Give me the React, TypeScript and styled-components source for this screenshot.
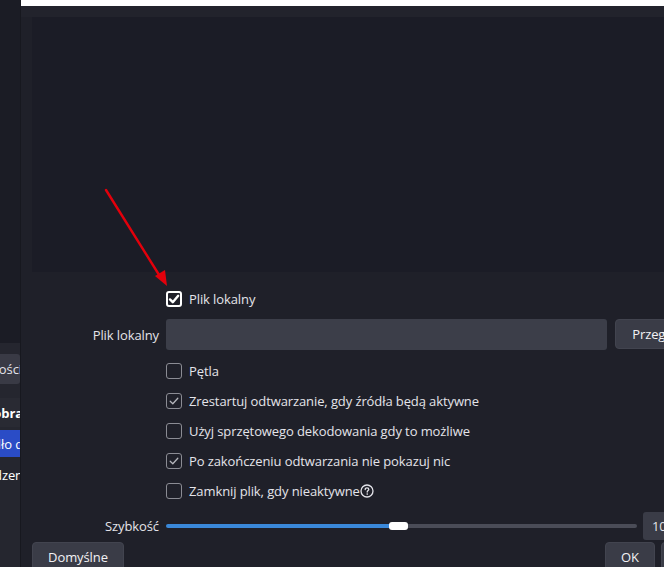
import { createGlobalStyle, styled } from "styled-components";

const GlobalStyle = createGlobalStyle`
  html, body {
    margin: 0;
    padding: 0;
    background: #1b1c25;
    overflow: hidden;
  }
  body {
    font-family: "Open Sans", "Noto Sans", sans-serif;
    font-size: 13px;
    letter-spacing: -0.1px;
    color: #e4e4ea;
  }
`;

type CheckItem = { label: string; checked: boolean; help?: boolean };

const options: CheckItem[] = [
  { label: "Pętla", checked: false },
  { label: "Zrestartuj odtwarzanie, gdy źródła będą aktywne", checked: true },
  { label: "Użyj sprzętowego dekodowania gdy to możliwe", checked: false },
  { label: "Po zakończeniu odtwarzania nie pokazuj nic", checked: true },
  { label: "Zamknij plik, gdy nieaktywne", checked: false, help: true },
];

const speed = 0.48;

const Check = ({ checked, strong }: { checked: boolean; strong?: boolean }) => (
  <StBox $strong={strong}>
    {checked && (
      <svg width="12" height="12" viewBox="0 0 12 12">
        <path
          d={strong ? "M2 6.4 L4.8 9.2 L10.2 2.8" : "M2.2 6.2 L4.8 8.8 L9.8 3.2"}
          fill="none"
          stroke={strong ? "#ffffff" : "#b4b5bb"}
          strokeWidth={strong ? 2.4 : 1.3}
          strokeLinecap="round"
          strokeLinejoin="round"
        />
      </svg>
    )}
  </StBox>
);

const HelpIcon = () => (
  <StHelp width="14" height="14" viewBox="0 0 14 14">
    <circle cx="7" cy="7" r="6" fill="none" stroke="#e4e4ea" strokeWidth="1.3" />
    <path
      d="M5.2 5.6 C5.2 4.4 6 3.8 7 3.8 C8 3.8 8.8 4.5 8.8 5.4 C8.8 6.5 7.2 6.7 7.2 8"
      fill="none"
      stroke="#e4e4ea"
      strokeWidth="1.3"
      strokeLinecap="round"
    />
    <circle cx="7.2" cy="10.1" r="0.8" fill="#e4e4ea" />
  </StHelp>
);

const App = () => {
  return (
    <>
      <GlobalStyle />
      <StPage>
        <StSide>
          <StSideTop />
          <StSidePanel>
            <StSideButton>
              <span>Właściwości</span>
            </StSideButton>
            <StSideItem $bold>
              <span>Filtry obra</span>
            </StSideItem>
            <StSideItem $active>
              <span>Źródło d</span>
            </StSideItem>
            <StSideItem>
              <span>Urządzen</span>
            </StSideItem>
          </StSidePanel>
        </StSide>

        <StDialog>
          <StTitleBar />
          <StBody>
            <StPreview />
            <StForm>
              <StRow $h={30}>
                <span />
                <StCheckLine>
                  <Check checked strong />
                  <span>Plik lokalny</span>
                </StCheckLine>
              </StRow>
              <StRow $h={31} $top={5}>
                <StLabel>Plik lokalny</StLabel>
                <StFileLine>
                  <StInput />
                  <StButton $w={96}>Przeglądaj</StButton>
                </StFileLine>
              </StRow>
              {options.map((o, i) => (
                <StRow key={o.label} $h={30} $top={i === 0 ? 6 : 0}>
                  <span />
                  <StCheckLine>
                    <Check checked={o.checked} />
                    <StText>
                      {o.label}
                      {o.help && <HelpIcon />}
                    </StText>
                  </StCheckLine>
                </StRow>
              ))}
              <StRow $h={28} $top={6}>
                <StLabel>Szybkość</StLabel>
                <StSliderLine>
                  <StTrack>
                    <StFill style={{ width: `${speed * 100}%` }} />
                    <StHandle />
                    <StRest />
                  </StTrack>
                  <StSpin>100%</StSpin>
                </StSliderLine>
              </StRow>
            </StForm>
            <StFooter>
              <StButton $w={92}>Domyślne</StButton>
              <StFooterRight>
                <StButton $w={50}>OK</StButton>
                <StButton $w={50}>Anuluj</StButton>
              </StFooterRight>
            </StFooter>
          </StBody>
          <StArrow width="80" height="110" viewBox="0 0 80 110">
            <line x1="3" y1="4" x2="58" y2="92" stroke="#e3000b" strokeWidth="2.4" strokeLinecap="round" />
            <path d="M52 90 L64 100 L62 84 Z" fill="#e3000b" />
          </StArrow>
        </StDialog>
      </StPage>
    </>
  );
};

export default App;

const StPage = styled.div`
  display: flex;
  width: 722px;
  height: 567px;
  overflow: hidden;
`;

const StSide = styled.div`
  width: 20px;
  flex: none;
  display: flex;
  flex-direction: column;
  background: #1b1c25;
`;

const StSideTop = styled.div`
  height: 343px;
  flex: none;
`;

const StSidePanel = styled.div`
  flex: 1;
  background: #25262f;
  padding-top: 11px;
  display: flex;
  flex-direction: column;
`;

const StSideButton = styled.div`
  height: 30px;
  flex: none;
  background: #393a45;
  border-radius: 0 3px 3px 0;
  display: flex;
  justify-content: flex-end;
  align-items: center;
  overflow: hidden;
  white-space: nowrap;
  margin-bottom: 14px;
  span {
    margin-right: -2px;
  }
`;

const StSideItem = styled.div<{ $bold?: boolean; $active?: boolean }>`
  height: ${(p) => (p.$active ? "27px" : "29px")};
  flex: none;
  margin-bottom: 3px;
  background: ${(p) => (p.$active ? "#2a4cc6" : p.$bold ? "#292a33" : "transparent")};
  font-weight: ${(p) => (p.$bold ? 700 : 400)};
  color: #ffffff;
  display: flex;
  justify-content: flex-end;
  align-items: center;
  overflow: hidden;
  white-space: nowrap;
  span {
    margin-right: -3px;
  }
`;

const StDialog = styled.div`
  position: relative;
  width: 702px;
  flex: none;
  display: flex;
  flex-direction: column;
  background: #1f2029;
  border-left: 1px solid #17181f;
`;

const StTitleBar = styled.div`
  height: 6px;
  flex: none;
  background: #ffffff;
`;

const StBody = styled.div`
  flex: none;
  padding: 11px 12px 0 11px;
  display: flex;
  flex-direction: column;
  background: linear-gradient(#22232c 0 11px, transparent 11px);
`;

const StPreview = styled.div`
  height: 255px;
  flex: none;
  background: #1b1c26;
`;

const StForm = styled.div`
  margin-top: 12px;
  display: flex;
  flex-direction: column;
`;

const StRow = styled.div<{ $h: number; $top?: number }>`
  display: grid;
  grid-template-columns: 127px 1fr;
  column-gap: 7px;
  align-items: center;
  flex: none;
  height: ${(p) => p.$h}px;
  margin-top: ${(p) => p.$top ?? 0}px;
`;

const StLabel = styled.span`
  text-align: right;
  white-space: nowrap;
`;

const StCheckLine = styled.div`
  display: flex;
  align-items: center;
  gap: 7px;
  white-space: nowrap;
`;

const StText = styled.span`
  display: inline-flex;
  align-items: center;
`;

const StHelp = styled.svg`
  margin-left: 0;
`;

const StBox = styled.span<{ $strong?: boolean }>`
  width: 16px;
  height: 16px;
  box-sizing: border-box;
  border: ${(p) => (p.$strong ? "2px solid #ffffff" : "1.5px solid #8b8c94")};
  border-radius: 3px;
  display: inline-flex;
  align-items: center;
  justify-content: center;
  flex: none;
`;

const StFileLine = styled.div`
  display: flex;
  gap: 8px;
  height: 100%;
`;

const StInput = styled.div`
  flex: 1;
  background: #3c3e49;
  border-radius: 3px;
`;

const StButton = styled.div<{ $w: number }>`
  width: ${(p) => p.$w}px;
  height: 30px;
  flex: none;
  box-sizing: border-box;
  background: #3a3c47;
  border: 1px solid #42444f;
  border-radius: 4px;
  display: flex;
  align-items: center;
  justify-content: center;
  color: #f2f2f5;
  white-space: nowrap;
`;

const StSliderLine = styled.div`
  display: flex;
  align-items: center;
  gap: 6px;
  height: 100%;
`;

const StTrack = styled.div`
  flex: 1;
  display: flex;
  align-items: center;
`;

const StFill = styled.div`
  height: 4px;
  background: #3a88d9;
  border-radius: 2px 0 0 2px;
  flex: none;
`;

const StHandle = styled.div`
  width: 19px;
  height: 8px;
  background: #ffffff;
  border-radius: 3px;
  margin-left: -3px;
  flex: none;
`;

const StRest = styled.div`
  flex: 1;
  height: 4px;
  background: #4a4c57;
  border-radius: 0 2px 2px 0;
`;

const StSpin = styled.div`
  width: 68px;
  height: 28px;
  box-sizing: border-box;
  background: #3a3c47;
  border-radius: 3px;
  padding-left: 9px;
  display: flex;
  align-items: center;
`;

const StFooter = styled.div`
  margin-top: 2px;
  display: flex;
  justify-content: space-between;
`;

const StFooterRight = styled.div`
  display: flex;
  gap: 6px;
`;

const StArrow = styled.svg`
  position: absolute;
  left: 82px;
  top: 186px;
  pointer-events: none;
`;
